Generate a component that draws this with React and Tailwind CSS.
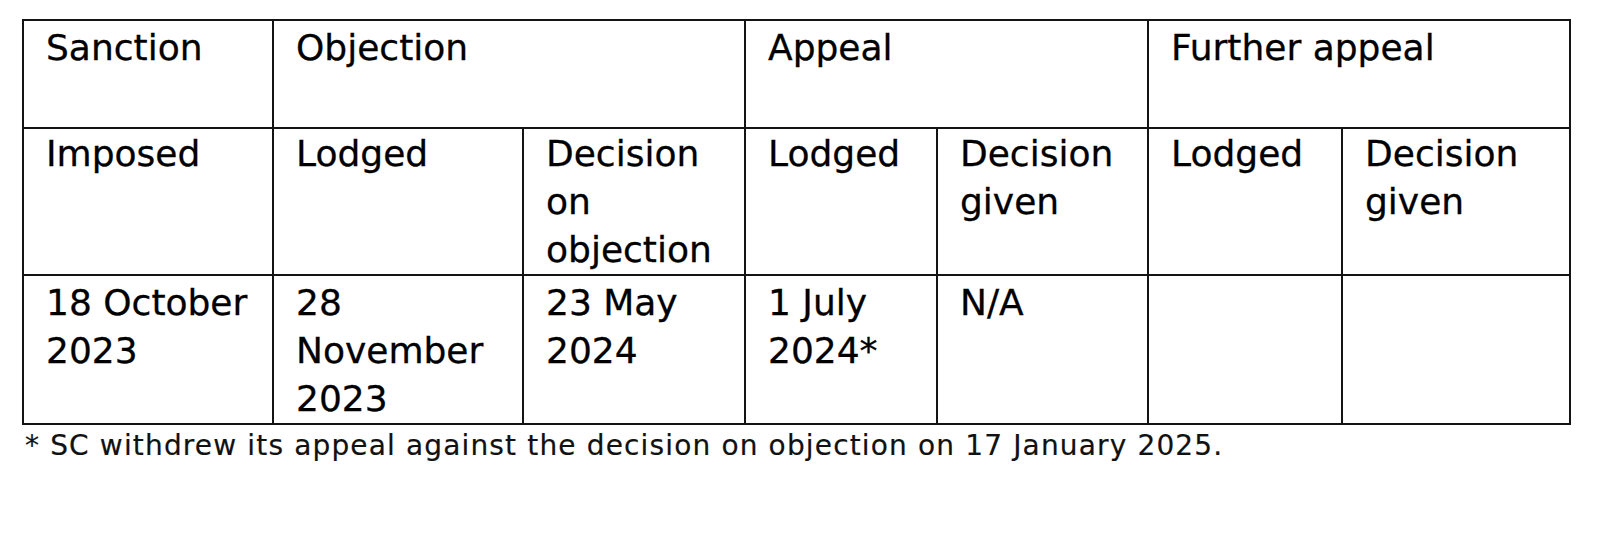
export default function App() {
  const base = "border-2 border-[#141414] align-top pl-[22px] pr-[6px]";
  const cell = base + " pt-[3px]";
  const cell2 = base + " pt-[1px]";
  return (
    <div className="w-[1600px] h-[552px] bg-white pl-[22px] pt-[19px]" style={{ fontFamily: '"DejaVu Sans", Verdana, sans-serif' }}>
      <table className="table-fixed border-collapse w-[1547px] text-[36px] leading-[48px] text-black [-webkit-text-stroke:0.3px_black]">
        <colgroup>
          <col className="w-[250px]" />
          <col className="w-[250px]" />
          <col className="w-[222px]" />
          <col className="w-[192px]" />
          <col className="w-[211px]" />
          <col className="w-[194px]" />
          <col className="w-[228px]" />
        </colgroup>
        <tbody>
          <tr className="h-[108px]">
            <td className={cell}>Sanction</td>
            <td className={cell} colSpan={2}>Objection</td>
            <td className={cell} colSpan={2}>Appeal</td>
            <td className={cell} colSpan={2}>Further appeal</td>
          </tr>
          <tr className="h-[146px]">
            <td className={cell2}>Imposed</td>
            <td className={cell2}>Lodged</td>
            <td className={cell2}>Decision<br />on<br />objection</td>
            <td className={cell2}>Lodged</td>
            <td className={cell2}>Decision<br />given</td>
            <td className={cell2}>Lodged</td>
            <td className={cell2}>Decision<br />given</td>
          </tr>
          <tr className="h-[148px]">
            <td className={cell}>18 October<br />2023</td>
            <td className={cell}>28<br />November<br />2023</td>
            <td className={cell}>23 May<br />2024</td>
            <td className={cell}>1 July<br />2024*</td>
            <td className={cell}>N/A</td>
            <td className={cell}></td>
            <td className={cell}></td>
          </tr>
        </tbody>
      </table>
      <p className="mt-[5px] text-[28px] leading-[32px] tracking-[1.15px] text-[#111] pl-[3px] [-webkit-text-stroke:0.2px_#111]">* SC withdrew its appeal against the decision on objection on 17 January 2025.</p>
    </div>
  );
}
